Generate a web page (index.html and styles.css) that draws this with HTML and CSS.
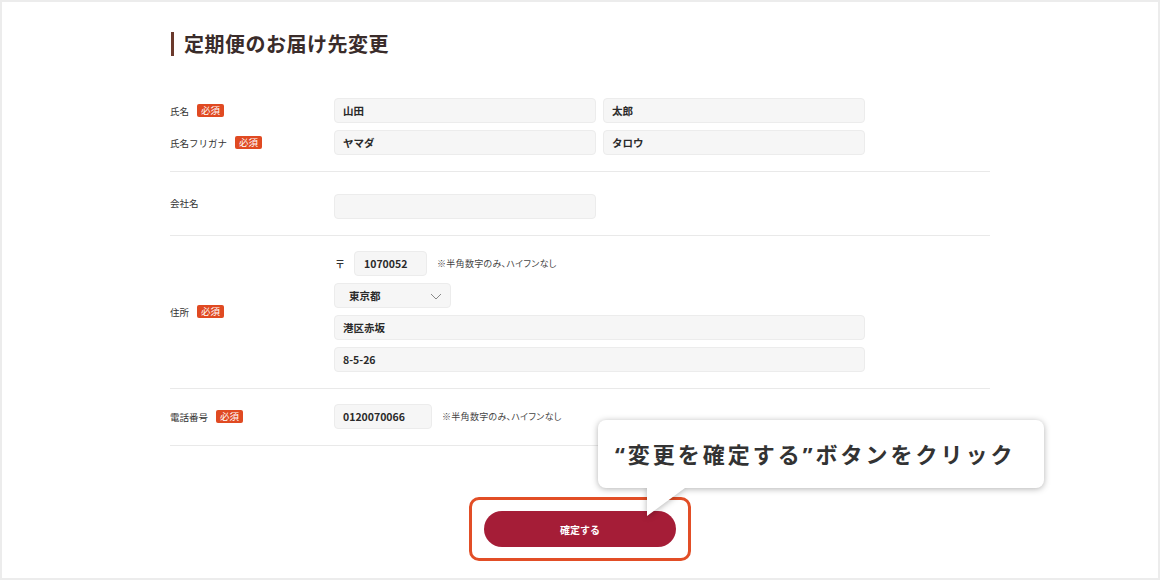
FILE: index.html
```html
<!DOCTYPE html>
<html lang="ja">
<head>
    <meta charset="UTF-8">
    <meta name="viewport" content="width=device-width, initial-scale=1.0">
    <title>定期便のお届け先変更</title>
    <link rel="stylesheet" href="styles.css">
</head>
<body>
    <div class="frame">
        <div class="content">
            <h1 class="title">定期便のお届け先変更</h1>

            <!-- 氏名 -->
            <div class="group group-first">
                <div class="row">
                    <div class="label">氏名<span class="req">必須</span></div>
                    <div class="fields">
                        <div class="input w-half">山田</div>
                        <div class="input w-half">太郎</div>
                    </div>
                </div>
                <div class="row">
                    <div class="label">氏名フリガナ<span class="req">必須</span></div>
                    <div class="fields">
                        <div class="input w-half">ヤマダ</div>
                        <div class="input w-half">タロウ</div>
                    </div>
                </div>
            </div>

            <!-- 会社名 -->
            <div class="group group-company">
                <div class="row">
                    <div class="label label-up">会社名</div>
                    <div class="fields">
                        <div class="input w-half"></div>
                    </div>
                </div>
            </div>

            <!-- 住所 -->
            <div class="group">
                <div class="row">
                    <div class="label">住所<span class="req">必須</span></div>
                    <div class="stack">
                        <div class="fields">
                            <span class="zip-mark">〒</span>
                            <div class="input w-zip">1070052</div>
                            <span class="note">※半角数字のみ、ハイフンなし</span>
                        </div>
                        <div class="input w-select">東京都
                            <svg class="chevron" width="12" height="7" viewBox="0 0 12 7"><path d="M1 1l5 5 5-5" fill="none" stroke="#888" stroke-width="1"/></svg>
                        </div>
                        <div class="input w-full">港区赤坂</div>
                        <div class="input w-full">8-5-26</div>
                    </div>
                </div>
            </div>

            <!-- 電話番号 -->
            <div class="group">
                <div class="row">
                    <div class="label">電話番号<span class="req">必須</span></div>
                    <div class="fields">
                        <div class="input w-tel">0120070066</div>
                        <span class="note">※半角数字のみ、ハイフンなし</span>
                    </div>
                </div>
            </div>
        </div>

        <div class="submit-area">
            <div class="highlight">
                <button class="submit" type="button">確定する</button>
            </div>
        </div>

        <div class="bubble">“変更を確定する”ボタンをクリック</div>
    </div>
</body>
</html>
```

FILE: styles.css
```css
* {
    box-sizing: border-box;
}

body {
    margin: 0;
    background-color: #fff;
    font-family: "Noto Sans CJK JP", "Noto Sans", sans-serif;
    color: #333;
}

.frame {
    position: relative;
    width: 1160px;
    height: 580px;
    border: 2px solid #ececec;
    overflow: hidden;
}

.content {
    width: 820px;
    margin-left: 168px;
    padding-top: 30px;
}

.title {
    margin: 0 0 20px 1px;
    padding-left: 10px;
    border-left: 3px solid #6b3a2c;
    font-size: 20px;
    line-height: 24px;
    font-weight: 700;
    color: #3a2c2a;
    letter-spacing: 0.5px;
}

.group {
    display: flex;
    flex-direction: column;
    gap: 7px;
    padding: 15px 0 16px;
    border-bottom: 1px solid #e9e9e9;
}

.group-first {
    padding-top: 22px;
}

.group-company {
    padding-top: 22px;
}

.row {
    display: flex;
    align-items: center;
}

.label {
    width: 164px;
    flex-shrink: 0;
    display: flex;
    align-items: center;
    font-size: 9.5px;
    color: #333;
}

.label-up {
    margin-top: -8px;
}

.req {
    margin-left: 8px;
    padding: 0 4px;
    height: 13px;
    line-height: 13px;
    border-radius: 2px;
    background-color: #e04a22;
    color: #fff;
    font-size: 9.5px;
}

.fields {
    display: flex;
    align-items: center;
    gap: 7px;
}

.stack {
    display: flex;
    flex-direction: column;
    gap: 7px;
}

.input {
    position: relative;
    height: 25px;
    padding-left: 8px;
    border: 1px solid #ececec;
    border-radius: 4px;
    background-color: #f6f6f6;
    font-size: 10.5px;
    font-weight: 700;
    line-height: 23px;
    color: #2a2a2a;
}

.w-half {
    width: 262px;
}

.w-full {
    width: 531px;
}

.w-zip {
    width: 73px;
    padding-left: 9px;
}

.w-select {
    width: 117px;
    padding-left: 14px;
}

.w-tel {
    width: 98px;
}

.chevron {
    position: absolute;
    right: 8px;
    top: 9px;
}

.zip-mark {
    width: 12px;
    margin-left: 1px;
    font-size: 10px;
    font-weight: 700;
}

.note {
    margin-left: 3px;
    font-size: 9px;
    color: #444;
    font-feature-settings: "palt";
    letter-spacing: 0.3px;
}

.submit-area {
    display: flex;
    justify-content: center;
    margin-top: 51px;
}

.highlight {
    padding: 11px 12px;
    border: 3px solid #e24e26;
    border-radius: 10px;
}

.submit {
    display: block;
    width: 192px;
    height: 36px;
    border: none;
    border-radius: 18px;
    background-color: #a51d37;
    color: #fff;
    font-family: inherit;
    font-size: 10px;
    font-weight: 700;
}

.bubble {
    position: absolute;
    left: 596px;
    top: 418px;
    width: 446px;
    height: 68px;
    padding-left: 17px;
    border-radius: 8px;
    background-color: #fff;
    filter: drop-shadow(0 1px 3px rgba(0, 0, 0, 0.3));
    font-family: "Noto Sans", "Noto Sans CJK JP", sans-serif;
    font-size: 22px;
    font-weight: 700;
    line-height: 68px;
    letter-spacing: 3px;
    color: #333;
}

.bubble::after {
    content: "";
    position: absolute;
    left: 49px;
    top: 100%;
    border-top: 28px solid #fff;
    border-right: 38px solid transparent;
}
```
